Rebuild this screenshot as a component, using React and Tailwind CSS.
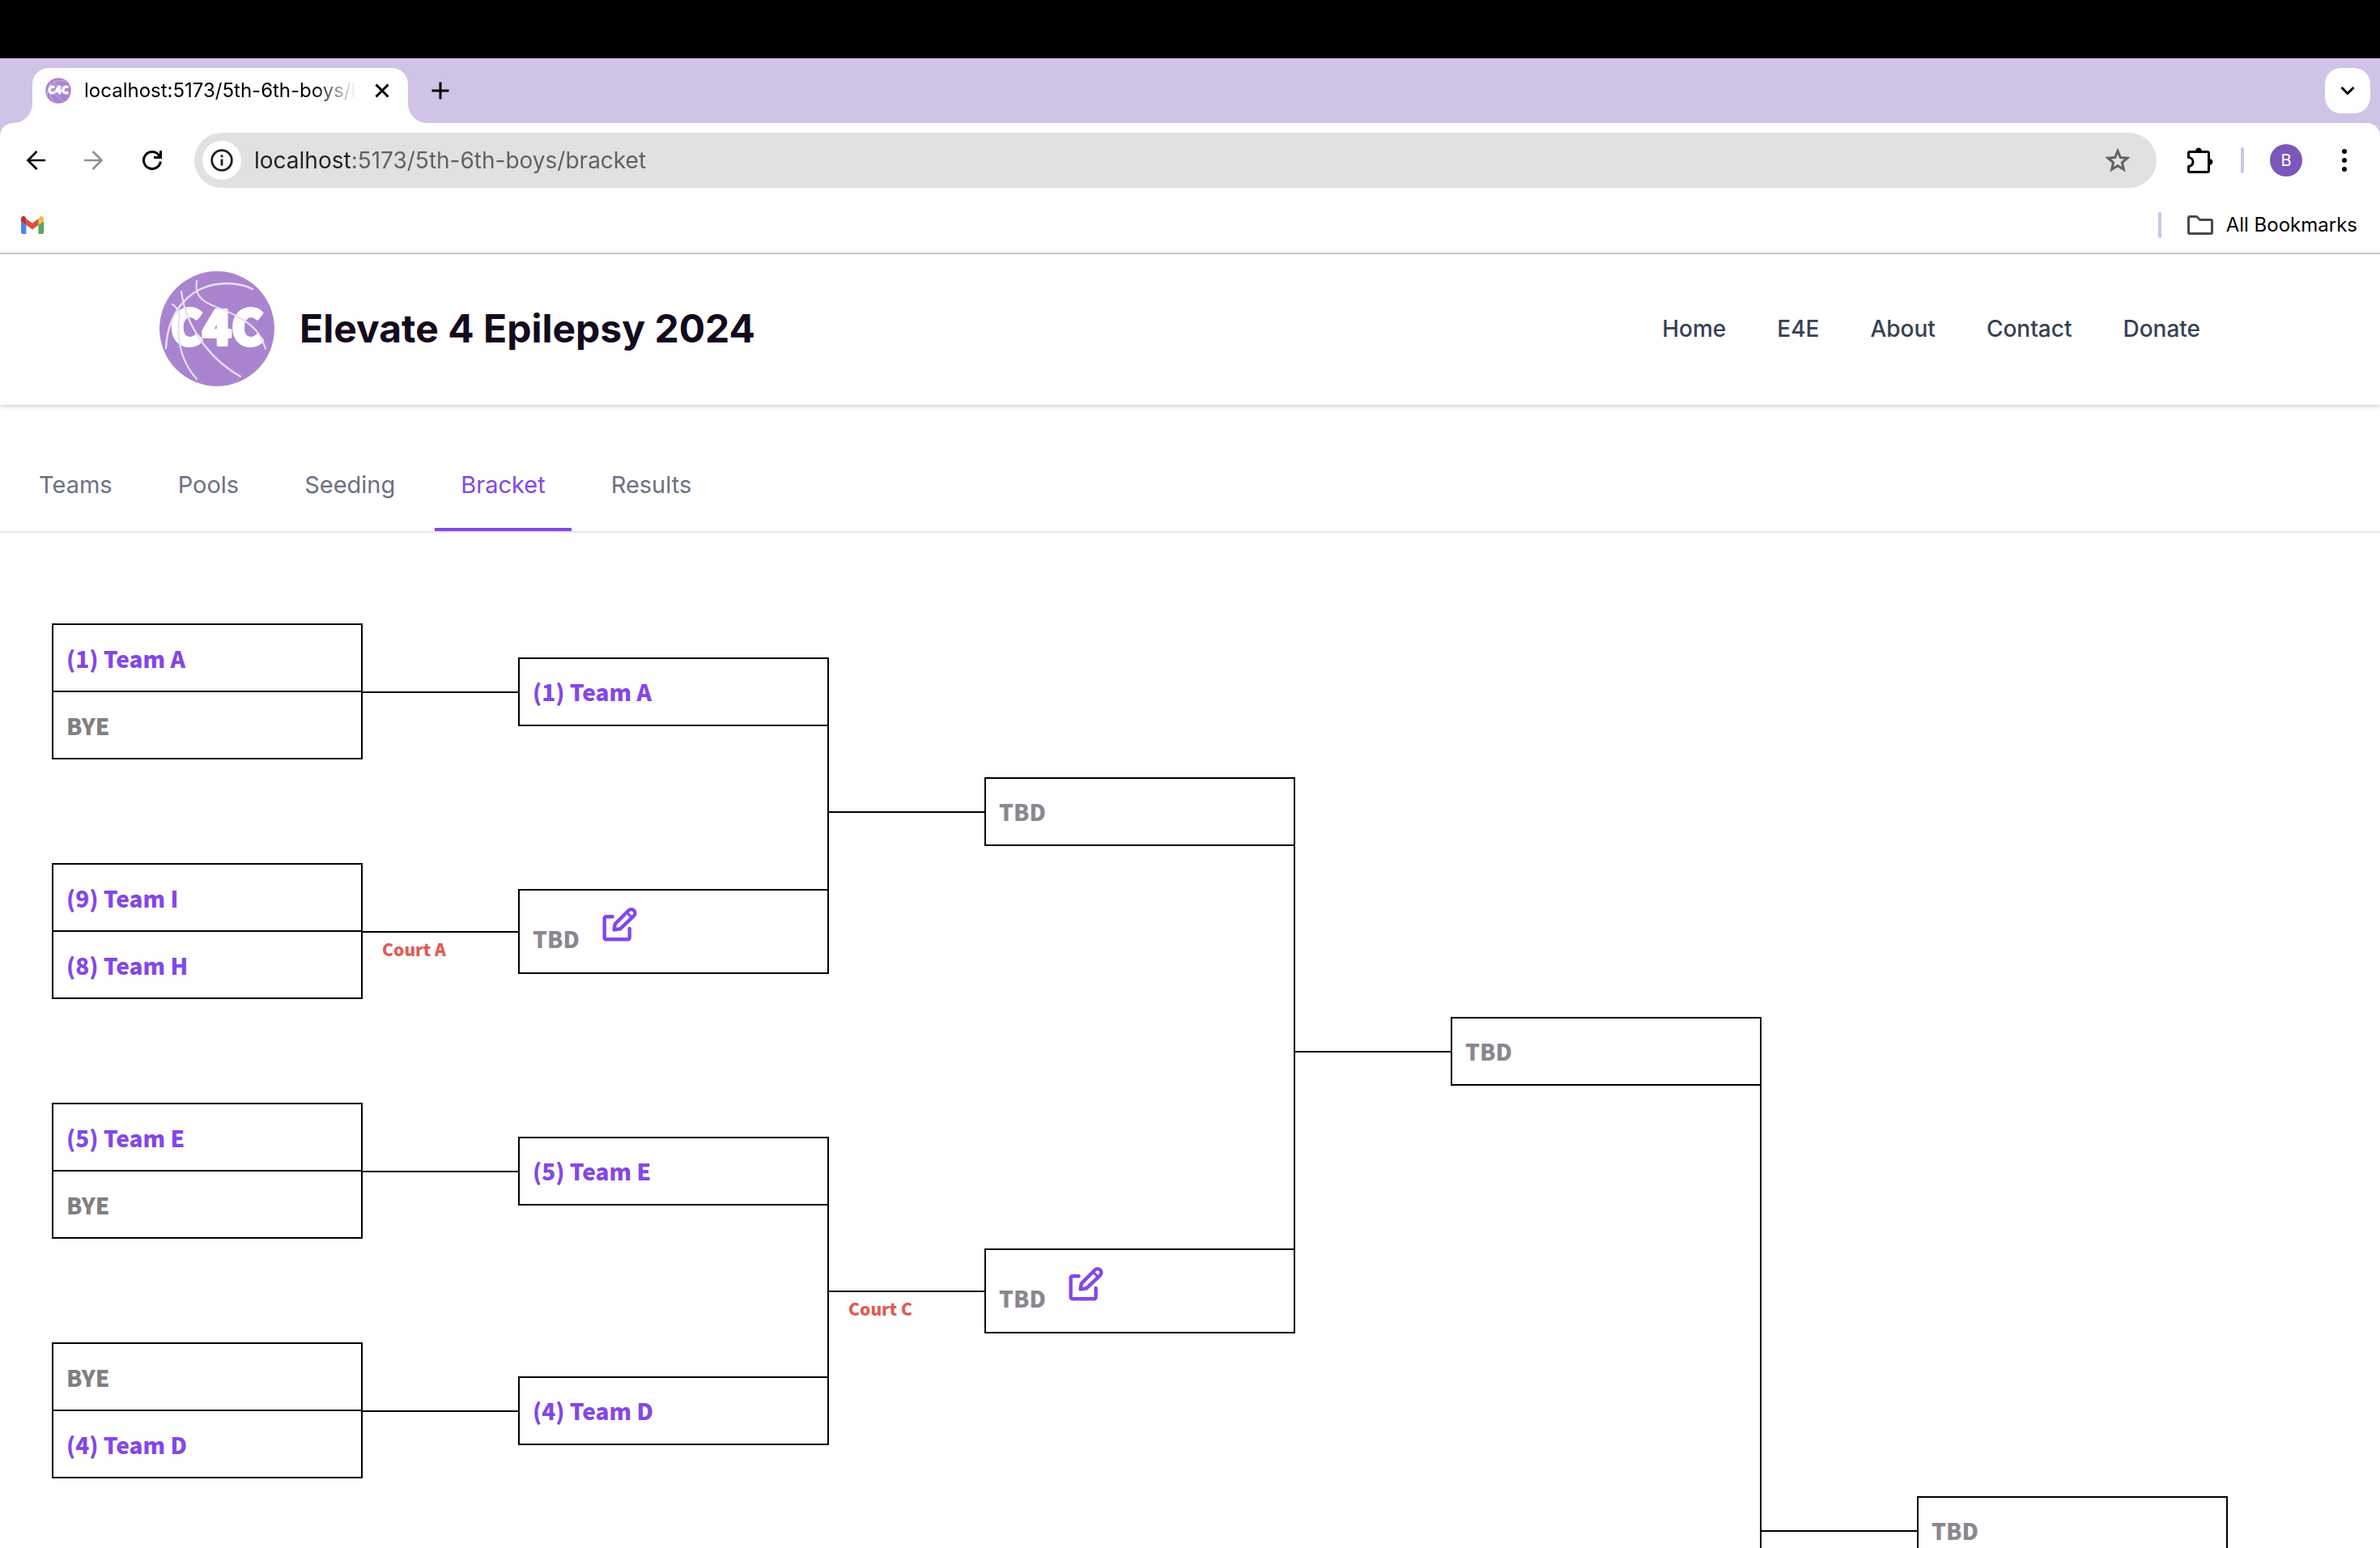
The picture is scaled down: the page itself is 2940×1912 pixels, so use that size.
import React from "react";

const UI = "font-['Inter',sans-serif]";
const BRACKET_FONT = "font-['Noto_Sans_CJK_SC',sans-serif]";

function Logo({ className }) {
  return (
    <svg viewBox="0 0 144 144" className={className} role="img" aria-label="C4C">
      <circle cx="72" cy="72" r="71" fill="#a985d0" />
      <text
        x="72"
        y="92"
        textAnchor="middle"
        fontSize="59"
        fontWeight="900"
        fill="#fff"
        stroke="#fff"
        strokeWidth="4"
        strokeLinejoin="round"
        className="font-['Noto_Sans_CJK_SC',sans-serif]"
      >
        C4C
      </text>
      <g fill="none" stroke="#e9dff4" strokeLinecap="round">
        <path d="M9 96 C11 56 34 17 84 16 C96 16 108 19 116 23" strokeWidth="2.400" />
        <path d="M47 13 C42 44 74 42 97 57 C118 68 126 78 132 97" strokeWidth="2" />
        <path d="M28 26 C33 66 60 108 101 131" strokeWidth="2.200" />
        <path d="M17 42 C22 44 24 50 26 56 C20 90 32 118 47 134" strokeWidth="2.200" />
      </g>
    </svg>
  );
}

function Gmail() {
  return (
    <svg viewBox="0 0 28 22" className="h-[22px] w-7">
      <path d="M0 6v14a2 2 0 0 0 2 2h4.500V10.500z" fill="#4f86ec" />
      <path d="M28 6v14a2 2 0 0 1-2 2h-4.500V10.500z" fill="#58a55c" />
      <path d="M21.500 3.500v7.500L28 6.200V3c0-2.600-2.800-4-4.900-2.500z" fill="#f2bd42" />
      <path d="M6.500 11V3L14 8.700 21.500 3v8L14 16.500z" fill="#d85140" />
      <path d="M0 3v3.200L6.500 11V3.500L4.900 .5C2.800-1 0 .4 0 3z" fill="#b3362b" />
    </svg>
  );
}

function EditIcon() {
  return (
    <svg viewBox="0 0 48 48" className="size-12" fill="none" stroke="currentColor" strokeWidth="4.400" strokeLinecap="round" strokeLinejoin="round">
      <path d="M14.600 14.300H6.700a2 2 0 0 0-2 2v24a2 2 0 0 0 2 2h27a2 2 0 0 0 2-2V29" />
      <path d="M16.600 30.400l1.200-7L34.500 6.500a4.600 4.600 0 0 1 6.600 6.600L24 29.300z" />
      <path d="M32.300 9l6.200 6.400" strokeWidth="3.200" />
    </svg>
  );
}

function TabStrip() {
  return (
    <div className="flex h-20 items-end bg-[#cfc4e6] pl-4 pr-3">
      <div className="size-6 bg-white"><div className="size-full rounded-br-[24px] bg-[#cfc4e6]" /></div>
      <div className="flex h-[68px] w-[464px] items-center rounded-t-[20px] bg-white pb-3 pl-4 pr-5">
        <Logo className="size-8 shrink-0" />
        <span className="ml-4 flex-1 overflow-hidden whitespace-nowrap bg-[linear-gradient(90deg,#000_84%,transparent)] bg-clip-text text-2xl text-transparent">
          localhost:5173/5th-6th-boys/bracket
        </span>
        <button type="button" aria-label="Close tab" className="ml-5">
          <svg viewBox="0 0 24 24" className="size-6" fill="none" stroke="#000" strokeWidth="3">
            <path d="M4.500 4.500l15 15M19.500 4.500l-15 15" />
          </svg>
        </button>
      </div>
      <div className="size-6 bg-white"><div className="size-full rounded-bl-[24px] bg-[#cfc4e6]" /></div>
      <button type="button" aria-label="New tab" className="mb-7 ml-1">
        <svg viewBox="0 0 24 24" className="size-6" fill="none" stroke="#000" strokeWidth="3">
          <path d="M12 1.500v21M1.500 12h21" />
        </svg>
      </button>
      <button type="button" aria-label="Search tabs" className="mb-3 ml-auto flex size-14 items-center justify-center rounded-[20px] bg-white">
        <svg viewBox="0 0 20 20" className="size-5" fill="none" stroke="#000" strokeWidth="3">
          <path d="M2.500 6l7.500 7.500L17.500 6" />
        </svg>
      </button>
    </div>
  );
}

function Toolbar() {
  return (
    <div className="bg-[#cfc4e6]">
      <div className="flex h-[92px] items-center rounded-t-[16px] bg-white px-8">
        <button type="button" aria-label="Back">
          <svg viewBox="0 0 24 24" className="size-6" fill="none" stroke="#000" strokeWidth="2.600">
            <path d="M24 12H3M13.500 1L2.500 12l11 11" />
          </svg>
        </button>
        <button type="button" aria-label="Forward" className="ml-12">
          <svg viewBox="0 0 24 24" className="size-6" fill="none" stroke="#8f8f8f" strokeWidth="2.600">
            <path d="M0 12h21M10.500 1l11 11-11 11" />
          </svg>
        </button>
        <button type="button" aria-label="Reload" className="ml-12">
          <svg viewBox="0 0 24 24" className="size-6" fill="none" stroke="#000" strokeWidth="3">
            <path d="M22.400 13.500A10.500 10.500 0 1 1 20.500 5.800L21.500 7" />
            <path d="M22.500 0v8.500H14" />
          </svg>
        </button>
        <div className="ml-10 flex h-[68px] flex-1 items-center rounded-full bg-[#e1e1e1] pl-[10px] pr-8">
          <button type="button" aria-label="View site information" className="flex size-12 items-center justify-center rounded-full bg-white">
            <svg viewBox="0 0 28 28" className="size-7" fill="none" stroke="#1f2023" strokeWidth="2.800">
              <circle cx="14" cy="14" r="12.300" />
              <path d="M14 12.500v8M14 7.200v3" />
            </svg>
          </button>
          <input
            type="text"
            aria-label="Address"
            defaultValue="localhost:5173/5th-6th-boys/bracket"
            className="ml-4 min-w-0 flex-1 bg-[linear-gradient(90deg,#1f2023_120px,#5f6062_120px)] bg-clip-text text-[28px] text-transparent outline-none"
          />
          <button type="button" aria-label="Bookmark this tab">
            <svg viewBox="0 0 32 32" className="size-8" fill="none" stroke="#606264" strokeWidth="3">
              <path d="M16 4.500l3.300 8 8.700.7-6.600 5.700 2 8.400L16 22.800l-7.400 4.500 2-8.400L4 13.200l8.700-.7z" />
            </svg>
          </button>
        </div>
        <button type="button" aria-label="Extensions" className="ml-[38px]">
          <svg viewBox="0 0 32 32" className="size-8">
            <path
              d="M1.500 7A1.500 1.500 0 0 1 3 5.500h22A1.500 1.500 0 0 1 26.500 7v22a1.500 1.500 0 0 1-1.500 1.500H3A1.500 1.500 0 0 1 1.500 29v-5.500a5.500 5.500 0 0 0 0-11z"
              fill="none"
              stroke="#000"
              strokeWidth="3"
              strokeLinejoin="round"
            />
            <path d="M10 5a4 4.500 0 0 1 8 0zM27 14a4.500 4 0 0 1 0 8z" fill="#000" />
          </svg>
        </button>
        <div className="ml-[34px] h-8 w-1 rounded-full bg-[#cfc4e6]" />
        <button type="button" aria-label="Profile" className="ml-8 flex size-10 items-center justify-center rounded-full bg-[#7b57bb] text-xl text-white">
          B
        </button>
        <button type="button" aria-label="Menu" className="ml-10">
          <svg viewBox="0 0 24 28" className="h-7 w-6">
            <circle cx="12" cy="3" r="3" />
            <circle cx="12" cy="14" r="3" />
            <circle cx="12" cy="25" r="3" />
          </svg>
        </button>
      </div>
    </div>
  );
}

function BookmarksBar() {
  return (
    <div className="flex h-[70px] items-center border-b-2 border-[#c6c6c6] bg-white pl-[26px] pr-7">
      <a href="#mail" aria-label="Gmail"><Gmail /></a>
      <div className="ml-auto h-8 w-1 rounded-full bg-[#cfc4e6]" />
      <button type="button" className="ml-8 flex items-center gap-4 text-2xl text-black">
        <svg viewBox="0 0 32 24" className="h-6 w-8" fill="none" stroke="#4a4a4a" strokeWidth="3" strokeLinejoin="round">
          <path d="M1.500 3A1.500 1.500 0 0 1 3 1.500h8.500l4 4H29A1.500 1.500 0 0 1 30.500 7v14a1.500 1.500 0 0 1-1.500 1.500H3A1.500 1.500 0 0 1 1.500 21z" />
        </svg>
        All Bookmarks
      </button>
    </div>
  );
}

const NAV = ["Home", "E4E", "About", "Contact", "Donate"];
const TABS = ["Teams", "Pools", "Seeding", "Bracket", "Results"];

function SiteHeader() {
  return (
    <header className="flex items-center justify-between bg-white pb-[22px] pl-[196px] pr-[222px] pt-5 shadow-[0_2px_6px_rgba(0,0,0,0.18)]">
      <div className="flex items-center gap-[30px]">
        <Logo className="size-[144px]" />
        <h1 className="text-[48px] font-bold leading-none text-[#140a1e]">Elevate 4 Epilepsy 2024</h1>
      </div>
      <nav className="flex gap-[63px] text-[28px] font-medium text-gray-700">
        {NAV.map((item) => (
          <a key={item} href={`#${item}`}>{item}</a>
        ))}
      </nav>
    </header>
  );
}

function SectionTabs() {
  return (
    <nav className="mt-12 flex gap-[17px] border-b-2 border-gray-200 px-4 text-[29px] leading-[42px] text-gray-500">
      {TABS.map((tab) => (
        <a
          key={tab}
          href={`#${tab}`}
          className={
            tab === "Bracket"
              ? "border-b-4 border-[#8347e8] px-8 pb-8 pt-[30px] text-[#8347e8]"
              : "border-b-4 border-transparent px-8 pb-8 pt-[30px]"
          }
        >
          {tab}
        </a>
      ))}
    </nav>
  );
}

const FINAL = {
  slots: ["TBD"],
  feeders: [
    {
      slots: ["TBD"],
      feeders: [
        {
          slots: ["TBD"],
          feeders: [
            { slots: ["(1) Team A"], feeders: [{ slots: ["(1) Team A", "BYE"] }] },
            { slots: ["TBD"], editable: true, court: "Court A", feeders: [{ slots: ["(9) Team I", "(8) Team H"] }] },
          ],
        },
        {
          slots: ["TBD"],
          editable: true,
          court: "Court C",
          feeders: [
            { slots: ["(5) Team E"], feeders: [{ slots: ["(5) Team E", "BYE"] }] },
            { slots: ["(4) Team D"], feeders: [{ slots: ["BYE", "(4) Team D"] }] },
          ],
        },
      ],
    },
    { slots: [] },
  ],
};

function Slot({ label, editable }) {
  const tone = label === "BYE" ? "text-[#808080]" : label === "TBD" ? "text-[#8a8790]" : "text-[#8347e8]";
  if (editable) {
    return (
      <div className={`flex h-[101px] gap-[26px] px-4 pt-[18px] ${tone}`}>
        <span className="pt-[21px] leading-10">{label}</span>
        <button type="button" aria-label="Edit result" className="size-12 text-[#8347e8]"><EditIcon /></button>
      </div>
    );
  }
  return <div className={`box-content flex h-[81px] items-center px-4 ${tone}`}>{label}</div>;
}

function Match({ match }) {
  const { slots, editable, court, feeders } = match;
  return (
    <div className="flex min-h-[296px] items-center justify-end">
      {feeders && (
        <>
          <div className="relative grid auto-rows-fr">
            {feeders.map((feeder, i) => (
              <Match key={i} match={feeder} />
            ))}
            {feeders.length > 1 && <div className="absolute bottom-1/4 right-0 top-1/4 w-0.5 bg-black" />}
          </div>
          <div className="h-1/2 w-48 self-end border-t-2 border-black pl-6 text-[21px] leading-[40px] text-[#e05a55]">
            {court}
          </div>
        </>
      )}
      <div className="w-96 divide-y-2 divide-black border-2 border-black">
        {slots.map((label, i) => (
          <Slot key={i} label={label} editable={editable} />
        ))}
      </div>
    </div>
  );
}

export default function App() {
  return (
    <div className={`flex h-screen flex-col overflow-hidden bg-white ${UI}`}>
      <div className="h-[72px] shrink-0 bg-black" />
      <div className="shrink-0">
        <TabStrip />
        <Toolbar />
        <BookmarksBar />
      </div>
      <div className="min-h-0 flex-1 overflow-hidden">
        <SiteHeader />
        <SectionTabs />
        <main className={`flex justify-start px-16 pt-12 text-[28px] font-black ${BRACKET_FONT}`}>
          <Match match={FINAL} />
        </main>
      </div>
    </div>
  );
}
